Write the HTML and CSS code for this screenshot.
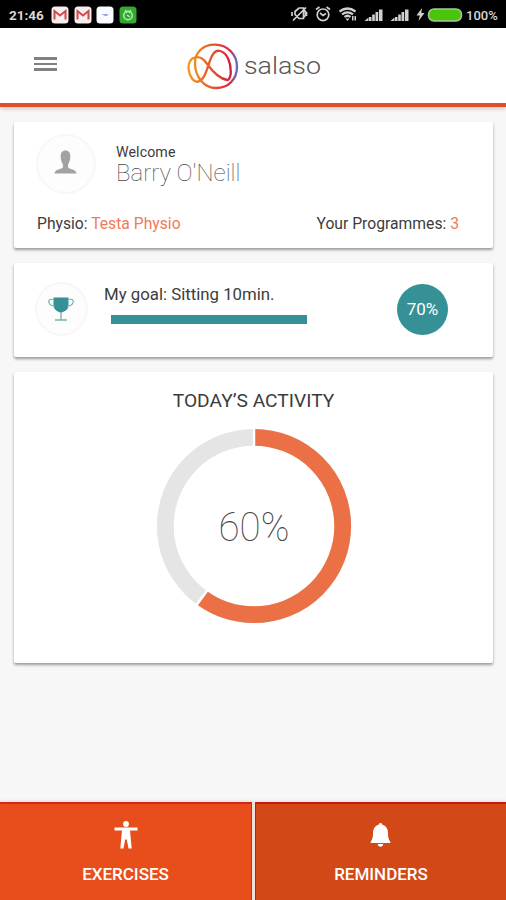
FILE: index.html
```html
<!DOCTYPE html>
<html lang="en">
<head>
<meta charset="utf-8">
<title>Salaso</title>
<link rel="stylesheet" href="styles.css">
</head>
<body>
<div class="status">
  <span class="clock">21:46</span>
  <div class="notifications">
    <svg class="tile" viewBox="0 0 18 18"><rect x=".5" y=".5" width="17" height="17" rx="3.5" fill="#f7eeee"/><path d="M3.500 13.500V5l5.500 4.500L14.500 5v8.500" fill="none" stroke="#cf4a48" stroke-width="2"/></svg>
    <svg class="tile" viewBox="0 0 18 18"><rect x=".5" y=".5" width="17" height="17" rx="3.5" fill="#f7eeee"/><path d="M3.500 13.500V5l5.500 4.500L14.500 5v8.500" fill="none" stroke="#cf4a48" stroke-width="2"/></svg>
    <svg class="tile" viewBox="0 0 18 18"><rect x=".5" y=".5" width="17" height="17" rx="3.500" fill="#fafbff"/><path d="M5.500 8h7l-1.500 2h-2z" fill="#8fa8f5"/></svg>
    <svg class="tile" viewBox="0 0 18 18"><rect x=".5" y=".5" width="17" height="17" rx="3.500" fill="#35a834"/><circle cx="9" cy="9.500" r="4.300" fill="none" stroke="#b6e8b0" stroke-width="1.500"/><path d="M6 4l2 3M12 4l-2 3M8 9l3 2" stroke="#b6e8b0" stroke-width="1.300"/></svg>
  </div>
  <svg class="system" viewBox="290 5 173 20">
    <g fill="none" stroke="#d0d0d0" stroke-width="1.700">
      <path d="M295 11.500l4-3.500h4.500v10.500h-4.500l-4-4zM292 12v4M306.500 12v4M306 7.500L293 20.500M303.500 10l2 1.500v4l-2 2"/>
      <circle cx="323" cy="14.800" r="5.800"/><path d="M320 13l3 2.500 3-2M316 9.500l3.500-2.500M330 9.500l-3.500-2.500"/>
      <path d="M339.500 11.500q8-6 16 0M342 14.300q5.500-4 11 0M344.500 17q3-2.500 6 0" stroke-width="2.200"/>
    </g>
    <path d="M345.500 18.500l2 2.500 2-2.500zM352 16h1.500v4.500H352zM354.500 16h1.500v4.500h-1.500z" fill="#d0d0d0"/>
    <g fill="#d0d0d0">
      <path d="M364.500 21l4-3.500V21zM369 17h2.500v4H369zM372.200 14.500h2.600V21h-2.600zM375.500 12h2.700v9h-2.700zM379 9.500h3.500V21H379z"/>
      <path d="M390.500 21l4-3.500V21zM395 17h2.500v4H395zM398.200 14.500h2.600V21h-2.600zM401.500 12h2.700v9h-2.700zM405 9.500h3.500V21H405z"/>
      <path d="M422 8l-5.500 7.500h3.300l-1.300 5.500 6-8h-3.200z"/>
    </g>
    <rect x="428.500" y="9" width="33" height="12" rx="5.500" fill="#49c50c" stroke="#a5c79a" stroke-width="1.500"/>
  </svg>
  <span class="charge">100%</span>
</div>

<header class="header">
  <div class="menu"><i></i><i></i><i></i></div>
  <div class="brand">
    <svg class="brand-mark" viewBox="51 39 156 141">
      <defs>
        <linearGradient id="warm" x1="0" x2="1"><stop offset="0" stop-color="#f39a1e"/><stop offset=".5" stop-color="#e9592c"/><stop offset="1" stop-color="#d81c3f"/></linearGradient>
        <linearGradient id="ring" gradientUnits="userSpaceOnUse" x1="75" y1="110" x2="202" y2="110"><stop offset="0" stop-color="#f08a22"/><stop offset=".45" stop-color="#e7502d"/><stop offset=".83" stop-color="#d92845"/><stop offset=".97" stop-color="#6a6ab8"/></linearGradient>
      </defs>
      <g fill="none" stroke-width="7" stroke-linecap="round">
        <path d="M75 103C73 69 98 44 134 44C174 44 201 75 201 110C201 147 176 174 138 174C101 174 76 139 75 103" stroke="url(#ring)"/>
        <path d="M75 82C60 85 54 103 56 119C59 143 73 157 84 155C105 150 111 115 121 89C128 69 138 59 151 63C172 69 184 100 182 132C180 143 178 150 172 150C145 146 124 120 109 99C99 85 87 79 75 82" stroke="url(#warm)"/>
      </g>
    </svg>
    <svg class="brand-name" viewBox="0 0 80 28"><text x="0" y="21.500" textLength="77" lengthAdjust="spacingAndGlyphs">salaso</text></svg>
  </div>
</header>

<main class="cards">
  <section class="card profile">
    <div class="person">
      <div class="avatar">
        <svg viewBox="0 0 24 24"><path d="M12 0C8.500 0 6.700 2.500 7 7C7.200 11 8.500 13 9.300 14.500V17.500C8.500 19.800 1 19 .5 24H23.500C23 19 15.500 19.800 14.700 17.500V14.500C15.500 13 16.800 11 17 7C17.300 2.500 15.500 0 12 0Z" fill="#a2a2a2"/></svg>
      </div>
      <div>
        <div class="welcome">Welcome</div>
        <div class="name">Barry O'Neill</div>
      </div>
    </div>
    <div class="facts">
      <span class="fact">Physio: <b>Testa Physio</b></span>
      <span class="fact programmes">Your Programmes: <b>3</b></span>
    </div>
  </section>

  <section class="card goal">
    <div class="trophy">
      <svg viewBox="0 0 26 24"><path d="M5.500.5h15V8c0 4-3 6.800-7.500 7.500C8.500 14.800 5.500 12 5.500 8z" fill="#359196"/><path d="M5.500 2.500C.5 1.500.5 4 1 5.500C1.500 8 4 9 7 9M20.500 2.500C25.500 1.500 25.500 4 25 5.500C24.500 8 22 9 19 9" fill="none" stroke="#73aeb1" stroke-width="1.200"/><path d="M13 15v8M7 23h12" stroke="#7eaeb0" stroke-width="1.400"/></svg>
    </div>
    <div class="goal-body">
      <div class="goal-title">My goal: Sitting 10min.</div>
      <div class="bar"></div>
    </div>
    <div class="badge">70%</div>
  </section>

  <section class="card activity">
    <h2>TODAY’S ACTIVITY</h2>
    <svg class="donut" viewBox="-98 -98 196 196">
      <circle r="88.700" fill="none" stroke="#e5e5e5" stroke-width="16.800"/>
      <circle r="88.700" fill="none" stroke="#ec7046" stroke-width="16.800" pathLength="100" stroke-dasharray="60 40" transform="rotate(-90)"/>
      <path d="M0-79V-98M-46.400 63.900L-57.600 79.300" stroke="#fff" stroke-width="2.500"/>
      <text y="15" text-anchor="middle" textLength="71" lengthAdjust="spacingAndGlyphs">60%</text>
    </svg>
  </section>
</main>

<nav class="tabs">
  <div class="tab exercises">
    <svg viewBox="0 0 28 28"><circle cx="14" cy="3" r="2.900"/><path d="M2.500 6.500h23v3H18L19.700 27.500h-3.200l-1.700-9h-1.600l-1.700 9H8.300L10 9.500H2.500z"/></svg>
    <span>EXERCISES</span>
  </div>
  <div class="tab reminders">
    <svg viewBox="0 0 28 28"><path d="M13.500 2c1.300 0 1.700 1 1.900 1.800C19.500 5 21 8.500 21 12c0 4 .5 6.500 2.300 8.700V22H3.700v-1.300C5.500 18.500 6 16 6 12c0-3.500 1.500-7 5.600-8.200C11.800 3 12.200 2 13.500 2zM10.800 23h5.400c0 3.500-5.400 3.500-5.400 0z"/></svg>
    <span>REMINDERS</span>
  </div>
</nav>
</body>
</html>
```
FILE: styles.css
```css
* { box-sizing: border-box; }
body {
  margin: 0;
  height: 900px;
  display: flex;
  flex-direction: column;
  background: #f7f7f7;
  color: #3c3c3c;
  font-family: Roboto, "Liberation Sans", sans-serif;
  overflow: hidden;
}
svg { display: block; flex: none; }

.status {
  height: 28px;
  flex: none;
  background: #000;
  color: #d8d8d8;
  display: flex;
  align-items: center;
  padding: 2px 7px 0 9px;
  font-weight: 700;
}
.clock { width: 42px; font-size: 13.500px; }
.notifications { display: flex; gap: 4.500px; }
.tile { width: 18px; height: 18px; }
.system { width: 173px; height: 20px; margin-left: auto; }
.charge { width: 33px; margin-left: 3px; font-size: 13px; font-weight: 500; }

.header {
  height: 79px;
  flex: none;
  background: #fff;
  border-bottom: 4px solid #de4f29;
  box-shadow: 0 2px 4px rgba(0, 0, 0, .18);
  display: flex;
  align-items: flex-start;
  padding: 15px 0 0 34px;
}
.menu { width: 23px; padding-top: 14px; display: grid; gap: 3px; }
.menu i { height: 2.500px; background: #818181; }
.brand { display: flex; margin-left: 130px; }
.brand-mark { width: 52px; height: 47px; }
.brand-name { width: 80px; height: 28px; margin: 9px 0 0 5px; }
.brand-name text { font-size: 24px; font-weight: 300; fill: #555; }

.cards { padding: 15px 13px 0 14px; display: grid; gap: 15px; }
.card { background: #fff; border-radius: 2px; box-shadow: 0 2px 3px rgba(0, 0, 0, .38); }

.profile { height: 126px; padding: 12px 34px 0 22px; }
.person { display: flex; gap: 20px; }
.avatar, .trophy {
  border: 2px solid #f7f7f7;
  border-radius: 50%;
  background: #fdfdfd;
  display: grid;
  place-items: center;
}
.avatar { width: 60px; height: 60px; padding: 0 2px 5px 0; }
.avatar svg { width: 23px; height: 24px; }
.welcome { margin-top: 9px; font-size: 14.200px; line-height: 18px; letter-spacing: .1px; }
.name { font-size: 24px; line-height: 24px; font-weight: 100; color: #444; }
.facts { display: flex; justify-content: space-between; margin-top: 20px; padding-left: 1px; font-size: 15.700px; line-height: 20px; }
.fact b { font-weight: 400; color: #f17a57; }

.goal { height: 94px; padding: 19px 45px 0 21px; display: flex; }
.trophy { width: 53px; height: 54px; padding-right: 1px; }
.trophy svg { width: 26px; height: 24px; }
.goal-body { margin-left: 16px; }
.goal-title { font-size: 16.800px; line-height: 24px; white-space: nowrap; }
.bar { width: 196px; height: 9px; margin: 9px 0 0 7px; background: #359196; }
.badge {
  width: 51px;
  height: 51px;
  margin: 2px 0 0 auto;
  border-radius: 50%;
  background: #359196;
  color: #fff;
  font-size: 17px;
  line-height: 51px;
  text-align: center;
}

.activity { height: 291px; padding-top: 17px; }
.activity h2 { margin: 0; font-size: 19.200px; line-height: 23px; font-weight: 400; text-align: center; }
.donut { width: 196px; height: 196px; margin: 16px auto 0; }
.donut text { font-size: 41px; font-weight: 100; fill: #444; }

.tabs {
  height: 98px;
  flex: none;
  margin-top: auto;
  display: grid;
  grid-template-columns: 252px 251px;
  gap: 3px;
  background: #f3dfda;
  box-shadow: 0 -2px 2px rgba(0, 0, 0, .06);
}
.tab {
  display: flex;
  flex-direction: column;
  align-items: center;
  gap: 14px;
  padding-top: 17px;
  color: #fff;
  font-size: 17px;
  line-height: 22px;
  font-weight: 500;
}
.tab svg { width: 28px; height: 28px; fill: #fff; }
.exercises { background: #e84e1b; border-top: 2px solid #d92313; border-right: 1px solid #d92313; }
.reminders { background: #d34817; border-top: 2px solid #c81912; border-left: 1px solid #c81912; }
```
